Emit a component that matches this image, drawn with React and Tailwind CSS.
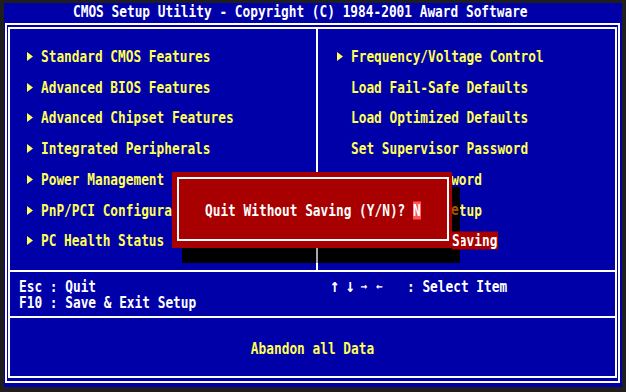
import React from 'react';

const leftItems = [
  'Standard CMOS Features',
  'Advanced BIOS Features',
  'Advanced Chipset Features',
  'Integrated Peripherals',
  'Power Management Setup',
  'PnP/PCI Configurations',
  'PC Health Status',
];

const rightItems = [
  { label: 'Frequency/Voltage Control', arrow: true },
  { label: 'Load Fail-Safe Defaults' },
  { label: 'Load Optimized Defaults' },
  { label: 'Set Supervisor Password' },
  { label: 'Set User Password' },
  { label: 'Save & Exit Setup' },
  { label: 'Exit Without Saving', active: true },
];

const Txt = ({ children, className = '' }) => (
  <span className={`inline-block scale-y-120 whitespace-pre ${className}`}>{children}</span>
);

const Arrow = () => (
  <span className="w-[14px] flex items-center">
    <svg width="6" height="9" viewBox="0 0 6 9">
      <polygon points="0,0 6,4.5 0,9" fill="#ffff55" />
    </svg>
  </span>
);

const MenuRow = ({ label, arrow, active }) => (
  <div className="h-[30.75px] flex items-center">
    {arrow ? <Arrow /> : <span className="w-[14px]" />}
    <Txt className={active ? 'bg-[#a80000] text-white pr-[1px]' : 'text-[#ffff55]'}>{label}</Txt>
  </div>
);

export default function App() {
  return (
    <div className="relative w-[626px] h-[392px] overflow-hidden bg-[#1e1e1e] pt-[3px] pl-[4px] font-['DejaVu_Sans_Mono',monospace] font-bold text-[12.8px] leading-[15px]">
      <div className="w-[618px] h-[384px] bg-[#0000a8] flex flex-col">
        <div className="h-[20px] pl-[69px] pt-[1px] text-white">
          <Txt>CMOS Setup Utility - Copyright (C) 1984-2001 Award Software</Txt>
        </div>

        <div className="ml-[1px] w-[615px] h-[360px] border-2 border-white pt-[2px] pb-[3px] px-[1px]">
          <div className="h-[351px] border-2 border-white flex flex-col">
            <div className="h-[241px] flex">
              <div className="w-[306px] pt-[12px] pl-[17px]">
                {leftItems.map((l) => (
                  <MenuRow key={l} label={l} arrow />
                ))}
              </div>
              <div className="w-[2px] bg-white" />
              <div className="flex-1 pt-[12px] pl-[19px]">
                {rightItems.map((r) => (
                  <MenuRow key={r.label} {...r} />
                ))}
              </div>
            </div>
            <div className="h-[2px] bg-white" />

            <div className="h-[44px] pt-[7px] pl-[9px] flex text-white leading-[15.5px]">
              <div className="w-[311px] flex flex-col">
                <Txt>Esc : Quit</Txt>
                <Txt>F10 : Save &amp; Exit Setup</Txt>
              </div>
              <div className="flex items-start">
                <span className="w-[15.4px] text-[15px] leading-[15.5px] scale-y-125 inline-block">↑</span>
                <span className="w-[15.4px] text-[15px] leading-[15.5px] scale-y-125 inline-block">↓</span>
                <span className="w-[15.4px] text-[11px] leading-[15.5px] inline-block">→</span>
                <span className="w-[15.4px] text-[11px] leading-[15.5px] inline-block">←</span>
                <Txt>  : Select Item</Txt>
              </div>
            </div>
            <div className="h-[2px] bg-white" />

            <div className="h-[58px] pt-[3px] flex items-center justify-center text-[#ffff55]">
              <Txt>Abandon all Data</Txt>
            </div>
          </div>
        </div>
      </div>

      {/* dialog shadow, keeps the dimmed cells beneath it */}
      <div className="absolute left-[182px] top-[187px] w-[278px] h-[76px] bg-black">
        <div className="absolute left-[269px] top-[15px] h-[15.5px] flex items-center text-[#a85400]">
          <Txt>e</Txt>
        </div>
        <div className="absolute left-[270px] top-[46px] h-[15.5px] flex items-center">
          <Txt className="bg-[#a80000] text-white pr-[1px]">S</Txt>
        </div>
        <div className="absolute left-[134px] top-[61px] w-[2px] h-[15px] bg-[#a8a8a8]" />
      </div>

      {/* dialog */}
      <div className="absolute left-[172px] top-[172px] w-[280px] h-[76px] bg-[#a80000]">
        <div className="absolute left-[5px] right-[3px] top-[5px] bottom-[7px] border-2 border-white" />
        <div className="absolute inset-0 pl-[33px] flex items-center text-white">
          <Txt>Quit Without Saving (Y/N)? </Txt>
          <Txt className="bg-[#ff5555]">N</Txt>
        </div>
      </div>
    </div>
  );
}
